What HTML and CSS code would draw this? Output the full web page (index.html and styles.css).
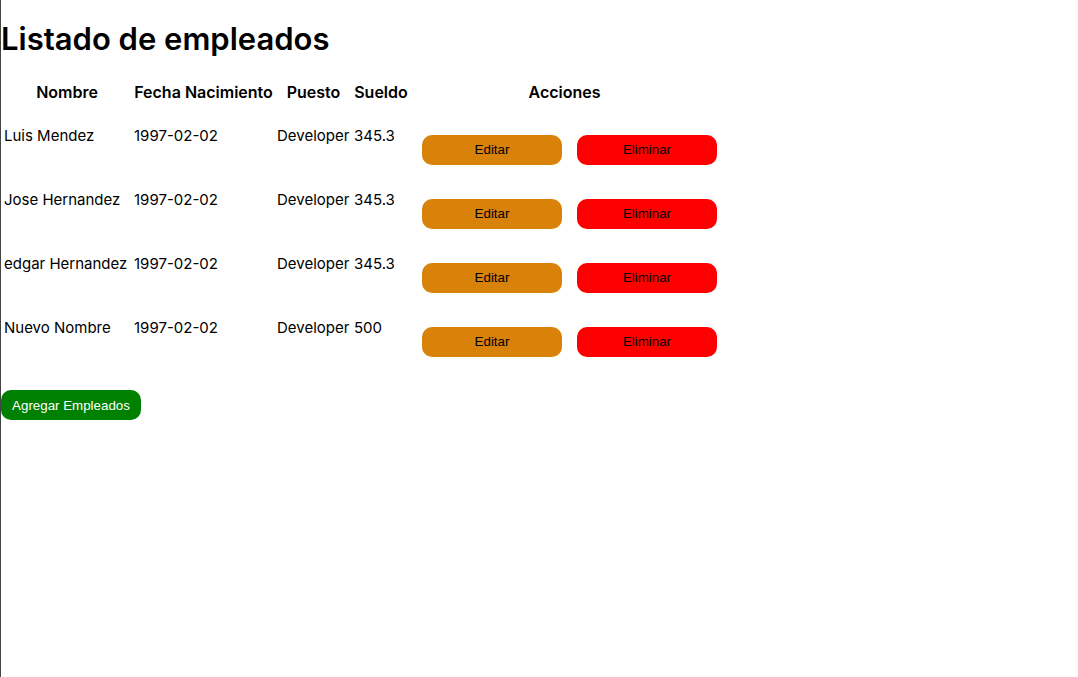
FILE: index.html
```html
<!DOCTYPE html>
<html lang="es">
<head>
<meta charset="utf-8">
<title>Listado de empleados</title>
<link rel="stylesheet" href="styles.css">
</head>
<body>
<main class="page">
  <h1 class="title">Listado de empleados</h1>
  <table class="employees">
    <thead>
      <tr><th class="col-name">Nombre</th><th class="col-date">Fecha Nacimiento</th><th class="col-job">Puesto</th><th class="col-pay">Sueldo</th><th class="col-actions">Acciones</th></tr>
    </thead>
    <tbody>
      <tr><td>Luis Mendez</td><td>1997-02-02</td><td>Developer</td><td>345.3</td><td><div class="actions"><button class="btn edit" type="button">Editar</button><button class="btn delete" type="button">Eliminar</button></div></td></tr>
      <tr><td>Jose Hernandez</td><td>1997-02-02</td><td>Developer</td><td>345.3</td><td><div class="actions"><button class="btn edit" type="button">Editar</button><button class="btn delete" type="button">Eliminar</button></div></td></tr>
      <tr><td>edgar Hernandez</td><td>1997-02-02</td><td>Developer</td><td>345.3</td><td><div class="actions"><button class="btn edit" type="button">Editar</button><button class="btn delete" type="button">Eliminar</button></div></td></tr>
      <tr><td>Nuevo Nombre</td><td>1997-02-02</td><td>Developer</td><td>500</td><td><div class="actions"><button class="btn edit" type="button">Editar</button><button class="btn delete" type="button">Eliminar</button></div></td></tr>
    </tbody>
  </table>
  <button class="btn add" type="button">Agregar Empleados</button>
</main>
</body>
</html>
```
FILE: styles.css
```css
* { box-sizing: border-box; }
body {
  margin: 0;
  background: #fff;
  color: #000;
  font-family: Inter, "Liberation Sans", sans-serif;
  font-size: 16px;
  line-height: 20px;
}
.page {
  min-height: 100vh;
  padding-top: 19px;
  border-left: 1px solid #444;
}
.title {
  margin: 0 0 20px;
  font-size: 31px;
  line-height: 40px;
  font-weight: 600;
}
.employees {
  border-spacing: 2px;
}
.employees th, .employees td { padding: 1px; white-space: nowrap; }
.employees th { font-weight: 600; }
.employees td { height: 62px; font-size: 15px; }
.col-name { width: 128px; }
.col-date { width: 141px; }
.col-job { width: 75px; }
.col-pay { width: 56px; }
.actions {
  display: flex;
  gap: 15px;
  padding: 27px 0 0 10px;
}
.btn {
  width: 140px;
  height: 30px;
  padding: 0;
  border: 0;
  border-radius: 10px;
  color: #000;
  font-family: "Liberation Sans", Arial, sans-serif;
}
.edit { background: #d8820a; }
.delete { background: #f00; }
.add { margin-top: 29px; background: #008000; color: #fff; }
```
